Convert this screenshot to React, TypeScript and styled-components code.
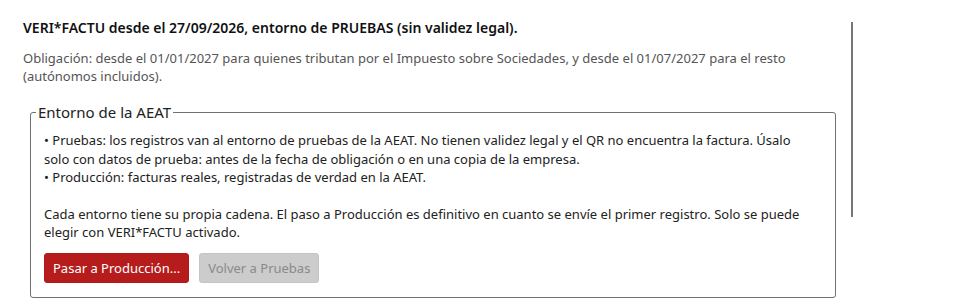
import styled, { createGlobalStyle } from 'styled-components';

const GlobalStyle = createGlobalStyle`
  html, body {
    margin: 0;
    padding: 0;
    background: #fff;
  }
  body {
    font-family: "Noto Sans", "Open Sans", sans-serif;
    color: #222;
  }
`;

const Page = styled.div`
  display: flex;
  align-items: flex-start;
  padding: 18px 0 0 23px;
`;

const Content = styled.div`
  width: 813px;
`;

const ScrollTrack = styled.div`
  margin-left: 15px;
  padding-top: 4px;
  width: 2px;
`;

const ScrollThumb = styled.div`
  height: 195px;
  background: #777;
`;

const Title = styled.div`
  font-size: 14px;
  font-weight: 600;
  line-height: 20px;
  color: #111;
`;

const Note = styled.p`
  margin: 11px 0 0;
  font-size: 13px;
  line-height: 18px;
  color: #555;
`;

const Box = styled.fieldset`
  margin: 17px 0 0 7px;
  padding: 9px 18px 14px 13px;
  border: 1px solid #707070;
  border-radius: 3px;
  min-width: 0;
`;

const Legend = styled.legend`
  margin-left: -8px;
  padding: 0 2px;
  font-size: 15px;
  color: #222;
`;

const Text = styled.p`
  margin: 0 0 18px;
  font-size: 13px;
  line-height: 18.5px;
  color: #222;

  &:last-of-type {
    margin-bottom: 0;
  }
`;

const Actions = styled.div`
  display: flex;
  gap: 10px;
  margin-top: 11px;
`;

const Button = styled.button<{ $variant: 'danger' | 'disabled' }>`
  height: 30px;
  padding: 0 8px;
  border: 1px solid ${({ $variant }) => ($variant === 'danger' ? '#b01a1a' : '#c4c4c4')};
  border-radius: 3px;
  background: ${({ $variant }) => ($variant === 'danger' ? '#b71c1c' : '#cccccc')};
  color: ${({ $variant }) => ($variant === 'danger' ? '#fff' : '#8a8a8a')};
  font-family: inherit;
  font-size: 13px;
  cursor: ${({ $variant }) => ($variant === 'danger' ? 'pointer' : 'default')};
`;

export default function App() {
  return (
    <>
      <GlobalStyle />
      <Page>
        <Content>
          <Title>VERI*FACTU desde el 27/09/2026, entorno de PRUEBAS (sin validez legal).</Title>
          <Note>
            Obligación: desde el 01/01/2027 para quienes tributan por el Impuesto sobre Sociedades, y desde el
            01/07/2027 para el resto (autónomos incluidos).
          </Note>
          <Box>
            <Legend>Entorno de la AEAT</Legend>
            <Text>
              • Pruebas: los registros van al entorno de pruebas de la AEAT. No tienen validez legal y el QR no
              encuentra la factura. Úsalo solo con datos de prueba: antes de la fecha de obligación o en una copia de
              la empresa.
              <br />• Producción: facturas reales, registradas de verdad en la AEAT.
            </Text>
            <Text>
              Cada entorno tiene su propia cadena. El paso a Producción es definitivo en cuanto se envíe el primer
              registro. Solo se puede elegir con VERI*FACTU activado.
            </Text>
            <Actions>
              <Button $variant="danger">Pasar a Producción...</Button>
              <Button $variant="disabled" disabled>
                Volver a Pruebas
              </Button>
            </Actions>
          </Box>
        </Content>
        <ScrollTrack>
          <ScrollThumb />
        </ScrollTrack>
      </Page>
    </>
  );
}
